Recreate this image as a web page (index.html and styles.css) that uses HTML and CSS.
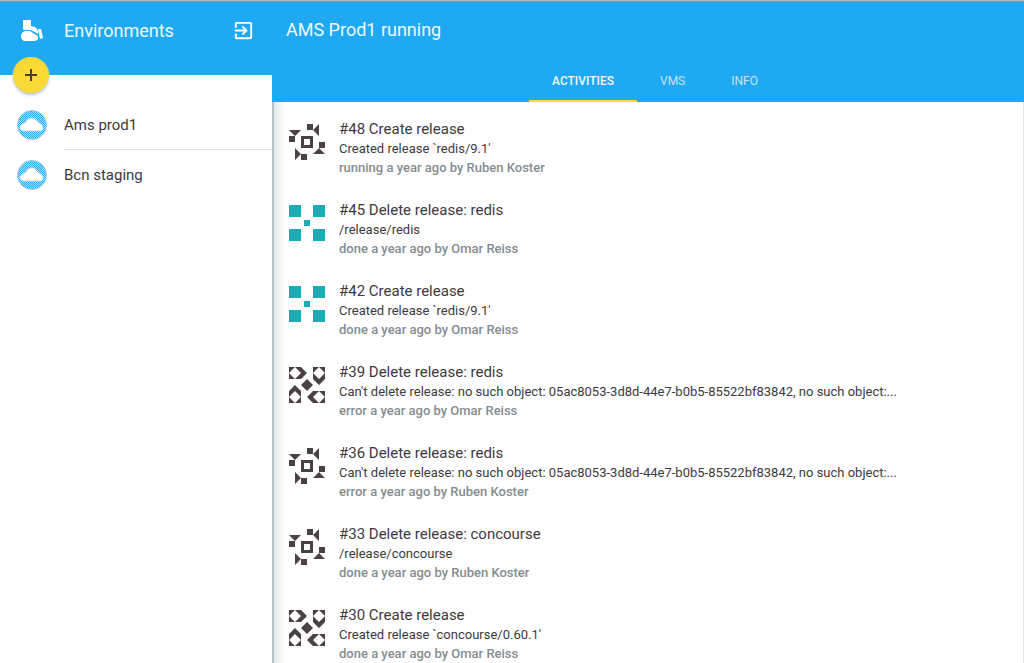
FILE: index.html
```html
<!DOCTYPE html>
<html lang="en">
<head>
<meta charset="utf-8">
<title>AMS Prod1 running</title>
<link rel="stylesheet" href="styles.css">
</head>
<body>
<svg class="defs" aria-hidden="true">
  <defs>
    <pattern id="weave" width="2" height="2" patternUnits="userSpaceOnUse">
      <rect width="2" height="2" fill="#1ea9f2"/>
      <rect width="1" height="1" fill="#b4dcea"/>
      <rect x="1" y="1" width="1" height="1" fill="#b4dcea"/>
    </pattern>
    <symbol id="cloud" viewBox="0 0 30 30">
      <circle cx="15" cy="15" r="14.5" fill="url(#weave)" stroke="#a5c6d2"/>
      <path d="M6 21a3.500 3.500 0 0 1-1.500-6.500L9 12a6 6 0 0 1 11-1l2 2a5 5 0 0 1 4 4 3 3 0 0 1-2 4z" fill="#fff" stroke="#b9ccd2" stroke-width=".7"/>
    </symbol>
    <symbol id="ident-a" viewBox="0 0 36 36">
      <path fill="#4b4045" fill-rule="evenodd" d="M18 0h6v6h-6zM24 6l6-6v12zM30 18h6v6h-6zM30 24l6 6H24zM12 30h6v6h-6zM12 30l-6 6V24zM0 12h6v6H0zM6 12L0 6h12zM12 12h12v12H12zM15 15v6h6v-6z"/>
    </symbol>
    <symbol id="ident-b" viewBox="0 0 36 36">
      <path fill="#22aab4" d="M0 0h12v12H0zM24 0h12v12H24zM0 24h12v12H0zM24 24h12v12H24zM15 15h6v6h-6z"/>
    </symbol>
    <symbol id="ident-c" viewBox="0 0 36 36">
      <g fill="#4b4045" fill-rule="evenodd">
        <path d="M18 12l6 6-6 6-6-6z"/>
        <path id="arrow" d="M0 0h12l6 6-6 6H0zM6 0L0 6l6 6 6-6z"/>
        <use href="#arrow" transform="rotate(90 18 18)"/>
        <use href="#arrow" transform="rotate(180 18 18)"/>
        <use href="#arrow" transform="rotate(270 18 18)"/>
      </g>
    </symbol>
  </defs>
</svg>
<div class="app">
  <aside class="sidebar">
    <header class="side-head">
      <svg class="logo" viewBox="0 0 22 22" aria-hidden="true"><path fill="#fff" d="M2 0h8v6l4 1q2 1 3 4v3l-5-3q-4-2-9-1l-1-1zM0 16q1-5 5-5 4-1 7 2l5 3v3q-1 2-4 2H3q-3-1-3-5zM17 9h3l2 9-3 1z"/></svg>
      <h1 class="heading">Environments</h1>
      <button class="exit" type="button" aria-label="Log out">
        <svg viewBox="0 0 24 24"><path fill="#fff" d="M10.090 15.590L11.500 17l5-5-5-5-1.410 1.410L12.670 11H3v2h9.670zM19 3H5a2 2 0 0 0-2 2v4h2V5h14v14H5v-4H3v4a2 2 0 0 0 2 2h14a2 2 0 0 0 2-2V5a2 2 0 0 0-2-2z"/></svg>
      </button>
      <button class="fab" type="button" aria-label="Add environment">
        <svg viewBox="0 0 12 12"><path d="M6 0v12M0 6h12" stroke="#4b4030" stroke-width="2"/></svg>
      </button>
    </header>
    <nav class="envs">
      <a class="env" href="#ams"><svg class="cloud"><use href="#cloud"/></svg><span class="env-name">Ams prod1</span></a>
      <a class="env" href="#bcn"><svg class="cloud"><use href="#cloud"/></svg><span class="env-name">Bcn staging</span></a>
    </nav>
  </aside>
  <main class="main">
    <header class="main-head">
      <h2 class="heading">AMS Prod1 running</h2>
      <nav class="tabs">
        <a class="tab active" href="#activities">ACTIVITIES</a>
        <a class="tab" href="#vms">VMS</a>
        <a class="tab" href="#info">INFO</a>
      </nav>
    </header>
    <ul class="list">
      <li class="item"><svg class="avatar"><use href="#ident-a"/></svg><div class="body"><h3>#48 Create release</h3><p>Created release `redis/9.1'</p><p class="meta">running a year ago by Ruben Koster</p></div></li>
      <li class="item"><svg class="avatar"><use href="#ident-b"/></svg><div class="body"><h3>#45 Delete release: redis</h3><p>/release/redis</p><p class="meta">done a year ago by Omar Reiss</p></div></li>
      <li class="item"><svg class="avatar"><use href="#ident-b"/></svg><div class="body"><h3>#42 Create release</h3><p>Created release `redis/9.1'</p><p class="meta">done a year ago by Omar Reiss</p></div></li>
      <li class="item"><svg class="avatar"><use href="#ident-c"/></svg><div class="body"><h3>#39 Delete release: redis</h3><p>Can't delete release: no such object: 05ac8053-3d8d-44e7-b0b5-85522bf83842, no such object:...</p><p class="meta">error a year ago by Omar Reiss</p></div></li>
      <li class="item"><svg class="avatar"><use href="#ident-a"/></svg><div class="body"><h3>#36 Delete release: redis</h3><p>Can't delete release: no such object: 05ac8053-3d8d-44e7-b0b5-85522bf83842, no such object:...</p><p class="meta">error a year ago by Ruben Koster</p></div></li>
      <li class="item"><svg class="avatar"><use href="#ident-a"/></svg><div class="body"><h3>#33 Delete release: concourse</h3><p>/release/concourse</p><p class="meta">done a year ago by Ruben Koster</p></div></li>
      <li class="item"><svg class="avatar"><use href="#ident-c"/></svg><div class="body"><h3>#30 Create release</h3><p>Created release `concourse/0.60.1'</p><p class="meta">done a year ago by Omar Reiss</p></div></li>
    </ul>
  </main>
</div>
</body>
</html>
```
FILE: styles.css
```css
* { box-sizing: border-box; }
body { margin: 0; font-family: Roboto, "Liberation Sans", sans-serif; color: #3c3a3e; background: #fff; }
h1, h2, h3, p, ul { margin: 0; padding: 0; }
a { color: inherit; text-decoration: none; }
button { border: 0; padding: 0; background: none; cursor: pointer; }
.defs { position: absolute; width: 0; height: 0; }
.app { display: flex; height: 100vh; overflow: hidden; border-top: 1px solid #aebdc0; }
.sidebar { flex: 0 0 272px; }
.side-head { position: relative; display: flex; align-items: center; height: 74px; padding: 0 17px 16px 21px; background: #1ea9f2; border-top: 1px solid #7f9aac; }
.logo { width: 22px; height: 22px; }
.heading { flex: 1; font-size: 18px; line-height: 24px; font-weight: 400; color: #eef8fd; }
.side-head .heading { margin-left: 21px; }
.exit, .exit svg { display: block; width: 23px; height: 23px; }
.fab { position: absolute; left: 13px; bottom: -18px; width: 36px; height: 36px; border-radius: 50%; background: #f9d936; display: flex; align-items: center; justify-content: center; box-shadow: 0 2px 3px #b9c6ca; }
.fab svg { width: 12px; height: 12px; }
.envs { padding-top: 25px; }
.env { display: flex; align-items: center; height: 50px; padding-left: 17px; }
.cloud { width: 30px; height: 30px; }
.env-name { flex: 1; margin-left: 17px; font-size: 15px; line-height: 50px; }
.env:not(:last-child) .env-name { box-shadow: inset 0 -1px #dfe3e5; }
.main { flex: 1; min-width: 0; border-right: 1px solid #dfe3e4; }
.main-head { display: flex; flex-direction: column; justify-content: space-between; height: 101px; padding: 16px 0 0 14px; background: #1ea9f2; border-top: 1px solid #7f9aac; margin-right: -1px; }
.main-head .heading { flex: none; }
.tabs { display: flex; justify-content: center; }
.tab { padding: 2px 23px 0; font-size: 12px; line-height: 38px; color: #c5e4f3; border-bottom: 2px solid transparent; }
.tab.active { color: #eef8fd; font-weight: 500; border-color: #f9d936; }
.list { list-style: none; padding: 18px 16px 0 15px; border-left: 2px solid #b5c3c8; height: calc(100% - 101px); background: linear-gradient(90deg, #e3e8e9, #fff 10px); }
.item { display: flex; gap: 14px; height: 81px; }
.avatar { flex: none; width: 36px; height: 36px; margin-top: 4px; }
.body { min-width: 0; }
h3 { font-size: 15px; line-height: 19px; font-weight: 400; }
.body p { font-size: 13px; line-height: 19px; white-space: nowrap; overflow: hidden; text-overflow: ellipsis; }
.body .meta { color: #858d90; font-weight: 500; }
```
